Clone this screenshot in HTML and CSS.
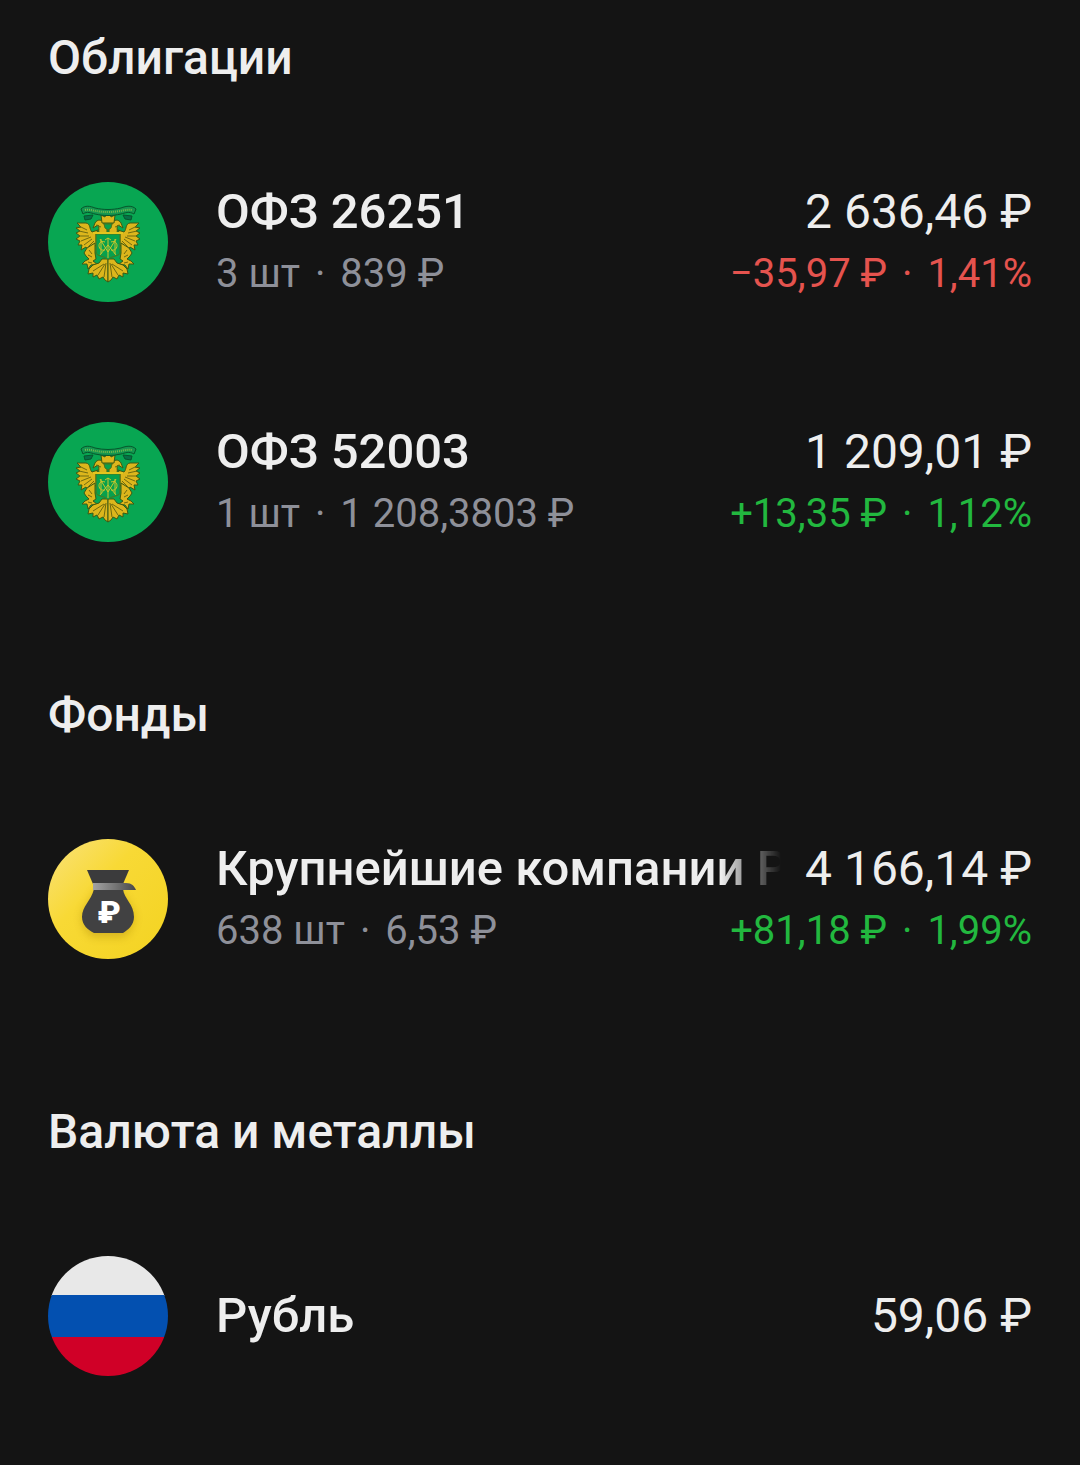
FILE: index.html
```html
<!DOCTYPE html>
<html lang="ru">
<head>
<meta charset="utf-8">
<meta name="viewport" content="width=device-width, initial-scale=1">
<title>Портфель</title>
<link rel="stylesheet" href="styles.css">
</head>
<body>
<svg class="sprite" aria-hidden="true">
  <defs>
    <g id="half-eagle">
      <!-- head and neck -->
      <path d="M59 52 L51 51 C50 48 52 45 50 43 L45 46 L47 41 C49 37 55 37 56 42 L59 47Z"/>
      <!-- wing feathers -->
      <path d="M50 48 L44 50 C41 47 43 42 38 41 L29 41 L33 45 L28 46 L32 49 L28 51 L32 54 L28 57 L32 59 L30 63 L34 63 L33 68 L38 65 L40 68 L45 62 L48 64 L48 52Z"/>
      <!-- leg and claw -->
      <path d="M47 61 L39 66 L36 71 L38 74 L41 77 L37 79 L34 82 L39 82 L40 87 L43 83 L49 82 L45 79 L48 77 L47 71Z"/>
      <!-- tail -->
      <path d="M60 77 L54 77 L51 81 L45 83 L41 87 L40 92 L45 91 L45 95 L49 93 L51 97 L55 95 L57 98 L60 100Z"/>
    </g>
    <g id="half-lines">
      <path d="M31 44 L39 48 M31 49 L40 51 M31 54 L41 54 M33 59 L43 55 M36 63 L44 57 M40 65 L46 59 M48 43 L53 45 M41 68 L44 72 M40 73 L44 75 M40 80 L44 81 M58 81 L56 95 M57 82 L50 93 M56 82 L45 89"/>
    </g>
    <symbol id="emblem" viewBox="0 0 120 120">
      <g class="emblem-gold">
        <use href="#half-eagle"/>
        <use href="#half-eagle" transform="matrix(-1 0 0 1 120 0)"/>
        <path d="M54 41 L53 33 L57 35 L58 32 L60 30 L62 32 L63 35 L67 33 L66 41Z"/>
      </g>
      <g class="emblem-dark">
        <use href="#half-lines"/>
        <use href="#half-lines" transform="matrix(-1 0 0 1 120 0)"/>
      </g>
      <path class="emblem-shield" d="M56 42 H64 L63 46 L60 48 L57 46Z"/>
      <path class="emblem-ribbon" d="M33 27 C37 23 42 24 47 26 C56 28 64 28 73 26 C78 24 84 23 88 27 L86 32 C81 29 77 31 73 32 C64 34 56 34 47 32 C43 31 39 29 35 32Z"/>
      <path class="emblem-motto" d="M37 28 C43 27 47 30 60 30 C73 30 77 27 84 28"/>
      <path class="emblem-knot" d="M36 34 L45 33 L43 37 L37 38Z M84 34 L75 33 L77 37 L83 38Z"/>
      <path class="emblem-shield" d="M48 52 H72 V70 C72 75 64 73 60 78 C56 73 48 75 48 70Z"/>
      <path class="emblem-bar" d="M45 51 H75"/>
      <path class="emblem-mono" d="M60 56 V76 M57 58 L60 56 L63 58 M53 57 V72 M67 57 V72 M52 73 L60 63 L68 73 M52 57 L60 70 L68 57 M57 60 C49 57 49 70 57 68 M63 60 C71 57 71 70 63 68"/>
    </symbol>
  </defs>
</svg>

<main class="portfolio">
  <section class="group">
    <h2 class="group-title">Облигации</h2>
    <ul class="positions">
      <li class="position">
        <svg class="avatar avatar-bond" viewBox="0 0 120 120" aria-hidden="true"><use href="#emblem"/></svg>
        <div class="lines">
          <div class="line line-main"><span class="name">ОФЗ 26251</span><span class="amount">2 636,46 ₽</span></div>
          <div class="line line-sub"><span class="quantity">3 шт <span class="dot">·</span> 839 ₽</span><span class="change loss">−35,97 ₽ <span class="dot">·</span> 1,41%</span></div>
        </div>
      </li>
      <li class="position">
        <svg class="avatar avatar-bond" viewBox="0 0 120 120" aria-hidden="true"><use href="#emblem"/></svg>
        <div class="lines">
          <div class="line line-main"><span class="name">ОФЗ 52003</span><span class="amount">1 209,01 ₽</span></div>
          <div class="line line-sub"><span class="quantity">1 шт <span class="dot">·</span> 1 208,3803 ₽</span><span class="change gain">+13,35 ₽ <span class="dot">·</span> 1,12%</span></div>
        </div>
      </li>
    </ul>
  </section>

  <section class="group">
    <h2 class="group-title">Фонды</h2>
    <ul class="positions">
      <li class="position">
        <svg class="avatar" viewBox="0 0 120 120" aria-hidden="true">
          <defs>
            <linearGradient id="coin" x1="0" y1="0" x2="1" y2="1">
              <stop offset="0" stop-color="#f9e27c"/><stop offset=".4" stop-color="#f8d935"/><stop offset="1" stop-color="#f3d321"/>
            </linearGradient>
            <linearGradient id="tie" x1="0" y1="0" x2="1" y2="0">
              <stop offset="0" stop-color="#a3a3a3"/><stop offset=".5" stop-color="#777"/><stop offset="1" stop-color="#484848"/>
            </linearGradient>
            <filter id="soft" x="-30%" y="-30%" width="160%" height="160%"><feGaussianBlur stdDeviation="4"/></filter>
          </defs>
          <rect width="120" height="120" fill="url(#coin)"/>
          <path d="M48 51 H73 C76 60 86 68 86 78 C86 88 80 96 75 98 H46 C40 96 34 88 34 78 C34 68 44 62 48 51Z" fill="#b08a10" opacity=".45" filter="url(#soft)"/>
          <path d="M39 31 H81 L75 45 H45Z" fill="#3b3b3c"/>
          <path d="M46 50 H75 C76 60 86 65 86 78 C86 86 80 91 75 94 H46 C40 91 34 86 34 78 C34 67 43 62 46 50Z" fill="#414142"/>
          <path d="M45 44 H78 C84 44 86 47 88 51 H45Z" fill="url(#tie)"/>
          <text class="bag-sign" x="61" y="84" text-anchor="middle">₽</text>
        </svg>
        <div class="lines">
          <div class="line line-main"><span class="name name-faded">Крупнейшие компании РФ</span><span class="amount">4 166,14 ₽</span></div>
          <div class="line line-sub"><span class="quantity">638 шт <span class="dot">·</span> 6,53 ₽</span><span class="change gain">+81,18 ₽ <span class="dot">·</span> 1,99%</span></div>
        </div>
      </li>
    </ul>
  </section>

  <section class="group">
    <h2 class="group-title">Валюта и металлы</h2>
    <ul class="positions">
      <li class="position">
        <svg class="avatar" viewBox="0 0 120 120" aria-hidden="true">
          <rect width="120" height="40" fill="#e8e8e8"/>
          <rect y="39" width="120" height="43" fill="#0350b0"/>
          <rect y="81" width="120" height="39" fill="#d00027"/>
        </svg>
        <div class="lines">
          <div class="line line-main"><span class="name">Рубль</span><span class="amount">59,06 ₽</span></div>
        </div>
      </li>
    </ul>
  </section>
</main>
</body>
</html>
```
FILE: styles.css
```css
* {
  box-sizing: border-box;
}

body {
  margin: 0;
  background: #141414;
  color: #eeeeee;
  font-family: Roboto, "Noto Sans", sans-serif;
}

.sprite {
  display: block;
  width: 0;
  height: 0;
}

.portfolio {
  padding: 30px 48px 28px;
}

.group + .group {
  padding-top: 85px;
}

.group-title {
  margin: 0;
  padding-bottom: 36px;
  font-size: 48px;
  font-weight: 500;
  line-height: 56px;
}

.positions {
  margin: 0;
  padding: 0;
  list-style: none;
}

.position {
  display: flex;
  align-items: center;
  gap: 48px;
  height: 240px;
}

.avatar {
  flex: none;
  width: 120px;
  height: 120px;
  border-radius: 50%;
}

.avatar-bond {
  background: #08a652;
}

.lines {
  flex: 1;
  min-width: 0;
}

.line {
  display: flex;
  align-items: baseline;
  justify-content: space-between;
  gap: 24px;
  white-space: nowrap;
}

.line-main {
  font-size: 48px;
  line-height: 64px;
}

.line-sub {
  font-size: 40px;
  line-height: 60px;
}

.name {
  min-width: 0;
  overflow: hidden;
  font-size: 49px;
  font-weight: 500;
}

.name-faded {
  flex: 1;
  -webkit-mask-image: linear-gradient(to left, transparent, #000 60px);
  mask-image: linear-gradient(to left, transparent, #000 60px);
}

.dot {
  margin: 0 5px;
}

.quantity {
  color: #8e9099;
}

.gain {
  color: #22b83f;
}

.loss {
  color: #e5534e;
}

.bag-sign {
  fill: #ffffff;
  font-size: 32px;
  font-weight: 900;
}

.emblem-gold {
  fill: #dcb61c;
  stroke: #3d5a14;
  stroke-width: 1;
}

.emblem-dark {
  fill: none;
  stroke: #6f6a10;
  stroke-width: 1;
}

.emblem-ribbon {
  fill: #159650;
  stroke: #07562c;
  stroke-width: 1;
}

.emblem-motto {
  fill: none;
  stroke: #75b84c;
  stroke-width: 2;
  stroke-dasharray: 1 1;
}

.emblem-knot {
  fill: #087048;
  stroke: #07562c;
}

.emblem-shield {
  fill: #08a04c;
  stroke: #53701a;
  stroke-width: 1;
}

.emblem-bar {
  stroke: #e5c51d;
  stroke-width: 2;
}

.emblem-mono {
  fill: none;
  stroke: #c9c62c;
  stroke-width: 1;
}
```
